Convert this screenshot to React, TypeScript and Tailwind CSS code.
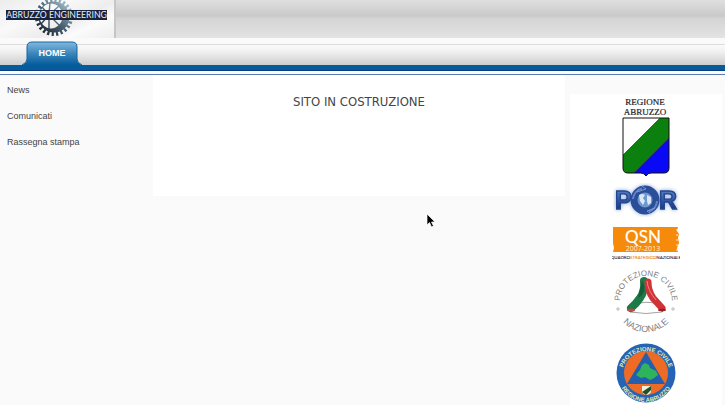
const menu = ['News', 'Comunicati', 'Rassegna stampa']

function GearLogo() {
  return (
    <svg viewBox="0 0 114 38" className="w-[114px] h-[38px] block" role="img" aria-label="Abruzzo Engineering">
      <defs>
        <linearGradient id="gear" gradientUnits="userSpaceOnUse" x1="42" y1="32" x2="68" y2="4">
          <stop offset="0" stopColor="#1c2733" />
          <stop offset="0.5" stopColor="#4d6575" />
          <stop offset="1" stopColor="#a3bccb" />
        </linearGradient>
      </defs>
      <circle cx="54" cy="17" r="17" fill="none" stroke="url(#gear)" strokeWidth="4" strokeDasharray="2.200 2.250" />
      {/* rim with an off-centre hole, wider on the right */}
      <path
        fillRule="evenodd"
        fill="url(#gear)"
        d="M38.500 17A15.500 15.500 0 1 1 69.500 17A15.500 15.500 0 1 1 38.500 17ZM39.500 16A11.500 12.500 0 1 0 62.500 16A11.500 12.500 0 1 0 39.500 16Z"
      />
      <path d="M49 15 42 7M49 15 50 2M49 15 59 6M49 15 49 30M49 15 60 26M49 15 41 24" fill="none" stroke="url(#gear)" strokeWidth="1.4" />
      <rect x="6" y="10" width="101" height="10" fill="#17223f" />
      <text x="56.500" y="18" textAnchor="middle" fontSize="8.700" fill="#e9edf3" className="font-['Lato',sans-serif]">
        ABRUZZO ENGINEERING
      </text>
    </svg>
  )
}

function RegioneLogo() {
  return (
    <svg viewBox="0 0 66 82" className="w-[66px] h-[82px] block" role="img" aria-label="Regione Abruzzo">
      <g fontSize="9" fill="#222" stroke="#222" strokeWidth="0.2" textAnchor="middle" className="font-['Liberation_Serif',serif]">
        <text x="32" y="9">REGIONE</text>
        <text x="32" y="19">ABRUZZO</text>
      </g>
      <clipPath id="shield">
        <path d="M10 22H56V72Q56 77 51 77H38Q35 77 33 80Q31 77 28 77H15Q10 77 10 72Z" />
      </clipPath>
      <g clipPath="url(#shield)">
        <path d="M10 22H56V81H10Z" fill="#fff" />
        <path d="M47 22H56V42L20 78H10V59Z" fill="#0c800f" />
        <path d="M56 42V81H17Z" fill="#0909f5" />
        <path d="M47 22 10 59M56 42 20 78" stroke="#222" strokeWidth="0.6" />
      </g>
      <path d="M10 22H56V72Q56 77 51 77H38Q35 77 33 80Q31 77 28 77H15Q10 77 10 72Z" fill="none" stroke="#111" />
    </svg>
  )
}

function PorLogo() {
  return (
    <svg viewBox="0 0 66 34" className="w-[66px] h-[34px] block" role="img" aria-label="POR">
      <defs>
        <linearGradient id="por" x1="0" y1="0" x2="0" y2="1">
          <stop offset="0.2" stopColor="#5478be" />
          <stop offset="0.8" stopColor="#173a85" />
        </linearGradient>
      </defs>
      <g className="drop-shadow-[0_0_2px_#8faadb]">
        <g fill="url(#por)" stroke="#234690" strokeWidth="1.4" fontSize="25" fontWeight="700" className="font-['Liberation_Sans',sans-serif]">
          <text x="2" y="26">P</text>
          <text x="46" y="26">R</text>
        </g>
        <circle cx="32" cy="17" r="11" fill="#6f97d0" stroke="#2a4e98" strokeWidth="7" />
      </g>
      <path d="M20 16A12 12 0 0 1 29 5.500M44 18A12 12 0 0 1 36 28.500" fill="none" stroke="#6385c6" strokeWidth="2" />
      <path d="M24 9 33 6 29 3M42 25 34 28 38 31" fill="none" stroke="#8ba7da" strokeWidth="0.8" />
      <path d="M26 12Q29 10 32 12L30 15 32 18 30 22 27 18ZM34 12 38 14 38 20 35 22 34 18Z" fill="#dce8f5" />
    </svg>
  )
}

function QsnLogo() {
  return (
    <svg viewBox="0 0 68 34" className="w-[68px] h-[34px] block" role="img" aria-label="QSN 2007-2013 Quadro Strategico Nazionale">
      <path d="M1 1H66L65 5 67 8 66 12 67 17 65 22 66 26H1L2 22 1 17 1 10Z" fill="#f68b0b" />
      <path d="M65 3V25" stroke="#fff" strokeWidth="0.8" strokeDasharray="2 3" />
      <g textAnchor="middle">
        <text x="31" y="17" fontSize="17" fill="#fff" stroke="#fff" strokeWidth="0.2" className="font-['Lato',sans-serif]">QSN</text>
        <text x="31" y="25" fontSize="7" fill="#fff0cf" className="font-['Open_Sans',sans-serif]">2007-2013</text>
        <text x="34" y="33" fontSize="4.400" fill="#263459" stroke="#263459" strokeWidth="0.1" className="font-['Lato',sans-serif]">
          QUADRO<tspan fill="#f08a16" stroke="#f08a16">STRATEGICO</tspan>NAZIONALE
        </text>
      </g>
    </svg>
  )
}

function ProtezioneNazionaleLogo() {
  return (
    <svg viewBox="0 0 64 64" className="w-[64px] h-[64px] block" role="img" aria-label="Protezione Civile Nazionale">
      <defs>
        <path id="pcnTop" d="M7 40A26 26 0 1 1 57 40" />
        <path id="pcnBottom" d="M1 32A31 31 0 0 0 63 32" />
      </defs>
      <g fontSize="8" fill="#808080" textAnchor="middle" className="font-['Liberation_Sans',sans-serif]">
        <text><textPath href="#pcnTop" startOffset="50%">PROTEZIONE CIVILE</textPath></text>
        <text fontSize="9"><textPath href="#pcnBottom" startOffset="50%">NAZIONALE</textPath></text>
      </g>
      <g fill="none" stroke="#999" strokeWidth="0.7">
        <circle cx="4" cy="40" r="1.2" />
        <circle cx="59" cy="40" r="1.2" />
      </g>
      <path d="M15 37Q32 30 49 36Q53 40 48 43Q32 46 16 43Z" fill="#fff" stroke="#8a8a8a" strokeWidth="0.8" />
      <path d="M30 12Q31 22 26 29Q22 35 17 39" fill="none" stroke="#1d7945" strokeWidth="8" strokeLinecap="round" />
      <path d="M34 13Q34 22 39 29L48 39" fill="none" stroke="#cf3337" strokeWidth="7" strokeLinecap="round" />
      <path d="M28 12Q31 16 30 22Q28 27 24 29Q26 21 28 12Z" fill="#155c38" />
      <path d="M33 12Q34 22 42 31" fill="none" stroke="#ec8582" />
      <ellipse cx="17" cy="41" rx="4" ry="1.500" fill="#c64545" />
      <ellipse cx="48" cy="41" rx="4" ry="1.200" fill="#8f2229" />
    </svg>
  )
}

function ProtezioneAbruzzoLogo() {
  return (
    <svg viewBox="0 0 60 60" className="w-[60px] h-[60px] block" role="img" aria-label="Protezione Civile Regione Abruzzo">
      <defs>
        <path id="pcaTop" d="M6 32A24 24 0 1 1 54 32" />
        <path id="pcaBottom" d="M2 31A28 28 0 0 0 58 31" />
      </defs>
      <circle cx="30" cy="30" r="29.500" fill="#2564b4" />
      <circle cx="30" cy="30" r="22" fill="#ee6b25" />
      <path d="M30 9 49 41H11Z" fill="#235fae" />
      <path d="M29 20 33 22 34 25 40 28 42 32 38 35 34 37 29 34 25 35 20 32 24 27 26 22Z" fill="#2eb45b" />
      <path d="M26 43H35V48Q35 51 30.500 52Q26 51 26 48Z" fill="#f0efd8" />
      <path d="M26 49 35 43V47L30 52Z" fill="#23502c" />
      <g fontSize="6" fontWeight="700" fill="#e2ecb5" textAnchor="middle" className="font-['Liberation_Sans',sans-serif]">
        <text><textPath href="#pcaTop" startOffset="50%">PROTEZIONE CIVILE</textPath></text>
        <text><textPath href="#pcaBottom" startOffset="50%">REGIONE ABRUZZO</textPath></text>
      </g>
    </svg>
  )
}

export default function App() {
  return (
    <div className="min-h-screen bg-white pr-[3px] font-['Liberation_Sans',Arial,sans-serif]">
      <div className="flex min-h-screen flex-col bg-[#fafafa]">
        <header>
          {/* Banner */}
          <div className="flex h-[38px] bg-[linear-gradient(to_bottom,#dfdfdf_0px,#c9c9c9_16px,#d4d4d4_18px,#e3e3e3_38px)]">
            <a href="#" className="block border-r-2 border-[#c6c6c6] bg-[linear-gradient(155deg,#ececec,#f9f9f9_35%,#ededed_60%,#fbfbfb_75%,#eeeeee)]">
              <GearLogo />
            </a>
          </div>

          {/* Main menu */}
          <nav className="flex h-[27px] items-end px-[22px] bg-[linear-gradient(to_bottom,#fafafa_6px,#dcdcdc_6px,#dcdcdc_7px,#fbfbfb_7px,#f0f0f0_14px,#cdcdcd_27px)]">
            <a href="#" className="relative flex h-6 w-[60px] items-center justify-center text-[9px] leading-none font-bold text-white">
              <svg viewBox="0 0 60 24" className="absolute inset-0 h-6 w-[60px]" aria-hidden="true">
                <defs>
                  <linearGradient id="tab" x1="0" y1="0" x2="0" y2="1">
                    <stop offset="0" stopColor="#83b9df" />
                    <stop offset="0.5" stopColor="#3b86bc" />
                    <stop offset="1" stopColor="#055b9a" />
                  </linearGradient>
                </defs>
                <path d="M0 24Q5 22 5 18V6Q5 1 10 1H50Q55 1 55 6V18Q55 22 60 24Z" fill="url(#tab)" />
                <path d="M0 24Q5 22 5 18V6Q5 1 10 1H50Q55 1 55 6V18Q55 22 60 24" fill="none" stroke="#14679f" />
              </svg>
              <span className="relative">HOME</span>
            </a>
          </nav>
          <div className="h-[6px] border-b border-[#0b3c80] bg-[#045c9c]" />
          <div className="h-1 border-b border-[#5a7bb3] bg-[#fafafa]" />
        </header>

        <div className="grid flex-1 grid-cols-[153px_1fr_160px]">
          <ul className="flex flex-col gap-[14px] px-[7px] pt-[9px] text-[9px] leading-3 text-[#444]">
            {menu.map((item) => (
              <li key={item}>
                <a href="#">{item}</a>
              </li>
            ))}
          </ul>

          <main className="h-[121px] bg-white pt-[18px]">
            <h1 className="text-center font-['DejaVu_Sans_Condensed','DejaVu_Sans',sans-serif] text-[13px] leading-[18px] text-[#444]">
              SITO IN COSTRUZIONE
            </h1>
          </main>

          {/* Partner logos */}
          <aside className="mt-[19px] mr-[3px] ml-[5px] flex flex-col items-center bg-white pt-[2px]">
            <a href="#"><RegioneLogo /></a>
            <a href="#" className="mt-[5px]"><PorLogo /></a>
            <a href="#" className="mt-[9px]"><QsnLogo /></a>
            <a href="#" className="mt-[9px]"><ProtezioneNazionaleLogo /></a>
            <a href="#" className="mt-[10px]"><ProtezioneAbruzzoLogo /></a>
          </aside>
        </div>
      </div>

      {/* Mouse pointer */}
      <svg viewBox="0 0 10 15" className="absolute top-[213px] left-[426px] h-[15px] w-[10px]" aria-hidden="true">
        <path d="M1 1V12L3.500 9.500 5.500 14 7.500 13 5.500 9H9Z" fill="#000" stroke="#fff" strokeWidth="0.7" />
      </svg>
    </div>
  )
}
